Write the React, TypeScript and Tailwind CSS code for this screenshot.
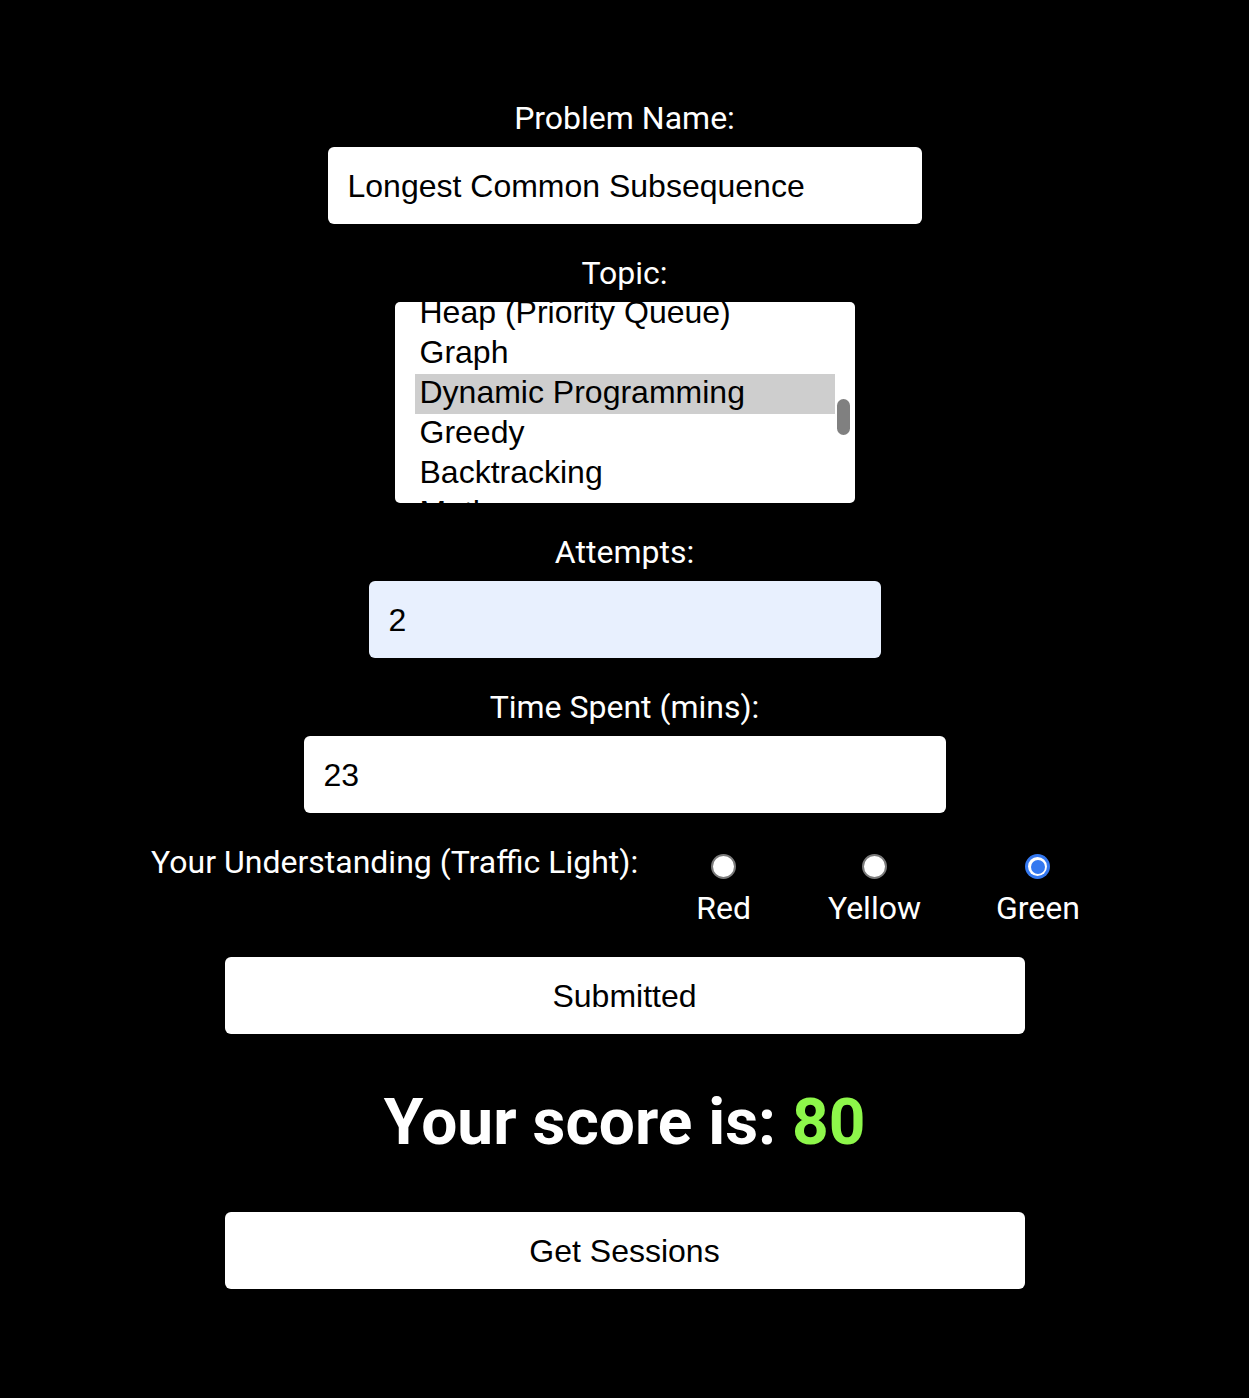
import React from "react";

const roboto = { fontFamily: "Roboto, 'Noto Sans', sans-serif" };
const arial = { fontFamily: "'Liberation Sans', Arial, sans-serif" };

function Label({ children }: { children: React.ReactNode }) {
  return (
    <div className="text-[32px] leading-[38px] text-white text-center" style={roboto}>
      {children}
    </div>
  );
}

function Field({ value, width, bg = "bg-white" }: { value: string; width: string; bg?: string }) {
  return (
    <div
      className={`${width} ${bg} h-[77px] rounded-[6px] px-[20px] flex items-center text-[32px] text-black`}
      style={arial}
    >
      {value}
    </div>
  );
}

function Radio({ checked }: { checked?: boolean }) {
  if (checked) {
    return (
      <div className="w-[25px] h-[25px] rounded-full bg-[#3478f0] flex items-center justify-center">
        <div className="w-[19px] h-[19px] rounded-full bg-white flex items-center justify-center">
          <div className="w-[14px] h-[14px] rounded-full bg-[#3478f0]" />
        </div>
      </div>
    );
  }
  return <div className="w-[25px] h-[25px] rounded-full bg-white border-[2px] border-[#7a7a7a]" />;
}

export default function App() {
  const topics = [
    "Array",
    "String",
    "Linked List",
    "Stack",
    "Queue",
    "Tree",
    "Heap (Priority Queue)",
    "Graph",
    "Dynamic Programming",
    "Greedy",
    "Backtracking",
    "Math",
  ];
  const visible = topics.slice(6);
  return (
    <div className="min-h-[1398px] w-full bg-black flex flex-col items-center pt-[99px]">
      <Label>Problem Name:</Label>
      <div className="mt-[10px]">
        <Field value="Longest Common Subsequence" width="w-[594px]" />
      </div>

      <div className="mt-[30px]">
        <Label>Topic:</Label>
      </div>
      <div className="mt-[10px] w-[460px] h-[201px] bg-white rounded-[5px] overflow-hidden relative">
        <div className="pl-[20px] pr-[20px] -mt-[8px]">
          {visible.map((t) => (
            <div
              key={t}
              className={`h-[40px] leading-[36px] px-[5px] text-[32px] text-black whitespace-nowrap ${
                t === "Dynamic Programming" ? "bg-[#cecece]" : ""
              }`}
              style={arial}
            >
              {t}
            </div>
          ))}
        </div>
        <div className="absolute left-[442px] top-[97px] w-[13px] h-[36px] rounded-full bg-[#808080]" />
      </div>

      <div className="mt-[30px]">
        <Label>Attempts:</Label>
      </div>
      <div className="mt-[10px]">
        <Field value="2" width="w-[512px]" bg="bg-[#e8f0fe]" />
      </div>

      <div className="mt-[30px]">
        <Label>Time Spent (mins):</Label>
      </div>
      <div className="mt-[10px]">
        <Field value="23" width="w-[642px]" />
      </div>

      <div className="mt-[30px] flex items-start pr-[18px]" style={roboto}>
        <div className="text-[32px] leading-[38px] text-white">Your Understanding (Traffic Light):</div>
        <div className="ml-[58px] flex flex-col items-center">
          <div className="mt-[11px]">
            <Radio />
          </div>
          <div className="mt-[10px] text-[32px] leading-[38px] text-white">Red</div>
        </div>
        <div className="ml-[77px] flex flex-col items-center">
          <div className="mt-[11px]">
            <Radio />
          </div>
          <div className="mt-[10px] text-[32px] leading-[38px] text-white">Yellow</div>
        </div>
        <div className="ml-[75px] flex flex-col items-center">
          <div className="mt-[11px]">
            <Radio checked />
          </div>
          <div className="mt-[10px] text-[32px] leading-[38px] text-white">Green</div>
        </div>
      </div>

      <div
        className="mt-[30px] w-[800px] h-[77px] bg-white rounded-[6px] flex items-center justify-center text-[32px] text-black"
        style={arial}
      >
        Submitted
      </div>

      <div className="mt-[48px] text-[64px] leading-[82px] font-bold text-white" style={roboto}>
        Your score is: <span className="text-[#8df74a]">80</span>
      </div>

      <div
        className="mt-[48px] w-[800px] h-[77px] bg-white rounded-[6px] flex items-center justify-center text-[32px] text-black"
        style={arial}
      >
        Get Sessions
      </div>
    </div>
  );
}
